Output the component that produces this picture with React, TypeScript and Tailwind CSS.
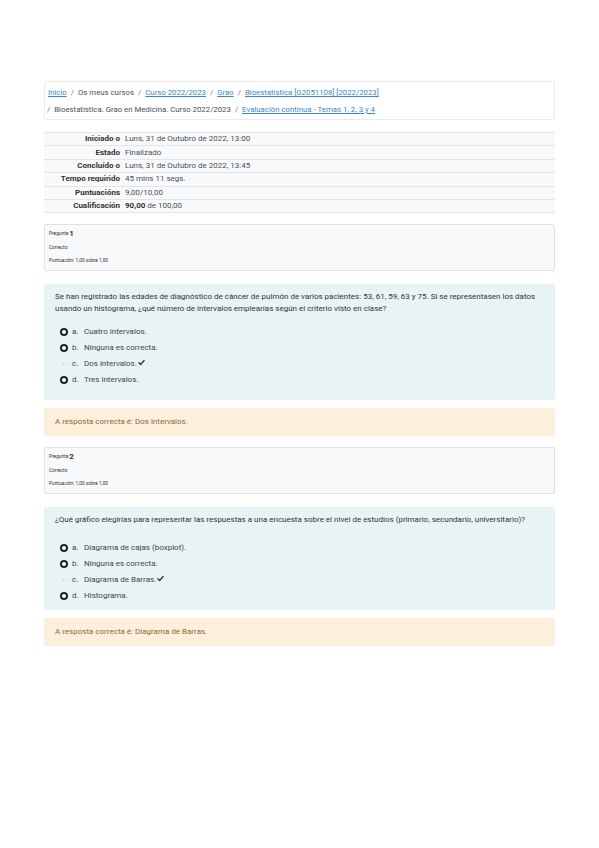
import React from 'react';

const font = { fontFamily: 'Roboto, "Noto Sans", sans-serif' };

const summary = [
  { label: 'Iniciado o', value: <>Luns, 31 de Outubro de 2022, 13:00</> },
  { label: 'Estado', value: <>Finalizado</> },
  { label: 'Concluído o', value: <>Luns, 31 de Outubro de 2022, 13:45</> },
  { label: 'Tempo requirido', value: <>45 mins 11 segs.</> },
  { label: 'Puntuacións', value: <>9,00/10,00</> },
  {
    label: 'Cualificación',
    value: (
      <>
        <b className="font-bold text-[#333]">90,00</b> de 100,00
      </>
    ),
  },
];

const questions = [
  {
    n: 1,
    text: 'Se han registrado las edades de diagnóstico de cáncer de pulmón de varios pacientes: 53, 61, 59, 63 y 75. Si se representasen los datos usando un histograma, ¿qué número de intervalos emplearías según el criterio visto en clase?',
    options: ['Cuatro intervalos.', 'Ninguna es correcta.', 'Dos intervalos.', 'Tres intervalos.'],
    correct: 2,
    answer: 'Dos intervalos.',
  },
  {
    n: 2,
    text: '¿Qué gráfico elegirías para representar las respuestas a una encuesta sobre el nivel de estudios (primario, secundario, universitario)?',
    options: ['Diagrama de cajas (boxplot).', 'Ninguna es correcta.', 'Diagrama de Barras.', 'Histograma.'],
    correct: 2,
    answer: 'Diagrama de Barras.',
  },
];

function Crumb({ children }: { children: React.ReactNode }) {
  return <a className="text-[#3b86cc] underline underline-offset-1">{children}</a>;
}

function Sep() {
  return <span className="mx-[4px] text-[#6c757d]">/</span>;
}

function Check() {
  return (
    <svg viewBox="0 0 16 16" className="ml-[1px] mt-[-3px] h-[7px] w-[7px] text-[#333]">
      <path d="M2 8.5 6 12.5 14 3.5" fill="none" stroke="currentColor" strokeWidth="3" strokeLinecap="round" strokeLinejoin="round" />
    </svg>
  );
}

function Question({ q }: { q: (typeof questions)[number] }) {
  const letters = ['a', 'b', 'c', 'd'];
  return (
    <>
      <div className="mt-[11px] h-[47px] rounded-[2px] border border-[#dee2e6] bg-[#f8f9fa] px-[4px] pt-[2px] text-[#333]">
        <div className="flex h-[13px] items-center">
          <span className="text-[4.8px]">Pregunta</span>
          <span className="ml-[1px] text-[8px] font-bold leading-none">{q.n}</span>
        </div>
        <div className="flex h-[14px] items-center text-[4.8px]">Correcto</div>
        <div className="flex h-[13px] items-center text-[4.8px]">Puntuación: 1,00 sobre 1,00</div>
      </div>
      <div className={`mt-[13px] rounded-[2px] bg-[#e7f3f5] px-[11px] pt-[7px] text-[8px] text-[#333] ${q.n === 1 ? 'h-[116px]' : 'h-[103px]'}`}>
        <p className="leading-[12px]">{q.text}</p>
        <div className={q.n === 1 ? 'mt-[9px]' : 'mt-[14px]'}>
          {q.options.map((o, i) => (
            <div key={o} className="flex h-[16px] items-center">
              <span className="flex w-[17px] justify-center">
                {i === q.correct ? (
                  <span className="h-[3px] w-[3px] rounded-full bg-[#d8dde0]" />
                ) : (
                  <span className="h-[8px] w-[8px] rounded-full border-[2px] border-[#222] bg-white" />
                )}
              </span>
              <span className="w-[12px] text-[#444]">{letters[i]}.</span>
              <span className="text-[#444]">{o}</span>
              {i === q.correct && <Check />}
            </div>
          ))}
        </div>
      </div>
      <div className="mt-[8px] flex h-[28px] items-center rounded-[2px] bg-[#fcefdc] px-[11px] text-[8px] text-[#8e6a34]">
        A resposta correcta é: {q.answer}
      </div>
    </>
  );
}

export default function App() {
  return (
    <div className="min-h-[848px] w-[599px] bg-white" style={font}>
      <div className="ml-[44px] w-[511px] pt-[81px]">
        <div className="h-[39px] rounded-[2px] border border-[#e9ecef] px-[3px] pt-[2px] text-[7.8px] leading-[17px] text-[#495057]">
          <div className="flex">
            <Crumb>Inicio</Crumb>
            <Sep />
            <span>Os meus cursos</span>
            <Sep />
            <Crumb>Curso 2022/2023</Crumb>
            <Sep />
            <Crumb>Grao</Crumb>
            <Sep />
            <Crumb>Bioestatística [G2051108] [2022/2023]</Crumb>
          </div>
          <div className="flex">
            <span className="ml-[-1px] mr-[4px] text-[#6c757d]">/</span>
            <span>Bioestatística. Grao en Medicina. Curso 2022/2023</span>
            <Sep />
            <Crumb>Evaluación continua - Temas 1, 2, 3 y 4</Crumb>
          </div>
        </div>

        <div className="mt-[12px] border-t border-[#e3e6e8] text-[8px]">
          {summary.map((r) => (
            <div key={r.label} className="flex h-[13.4px] items-center border-b border-[#e3e6e8] bg-[#f8f9fa]">
              <div className="w-[77px] whitespace-nowrap pr-[1px] text-right font-bold text-[#333]">{r.label}</div>
              <div className="pl-[4px] text-[#495057]">{r.value}</div>
            </div>
          ))}
        </div>

        {questions.map((q) => (
          <Question key={q.n} q={q} />
        ))}
      </div>
    </div>
  );
}
